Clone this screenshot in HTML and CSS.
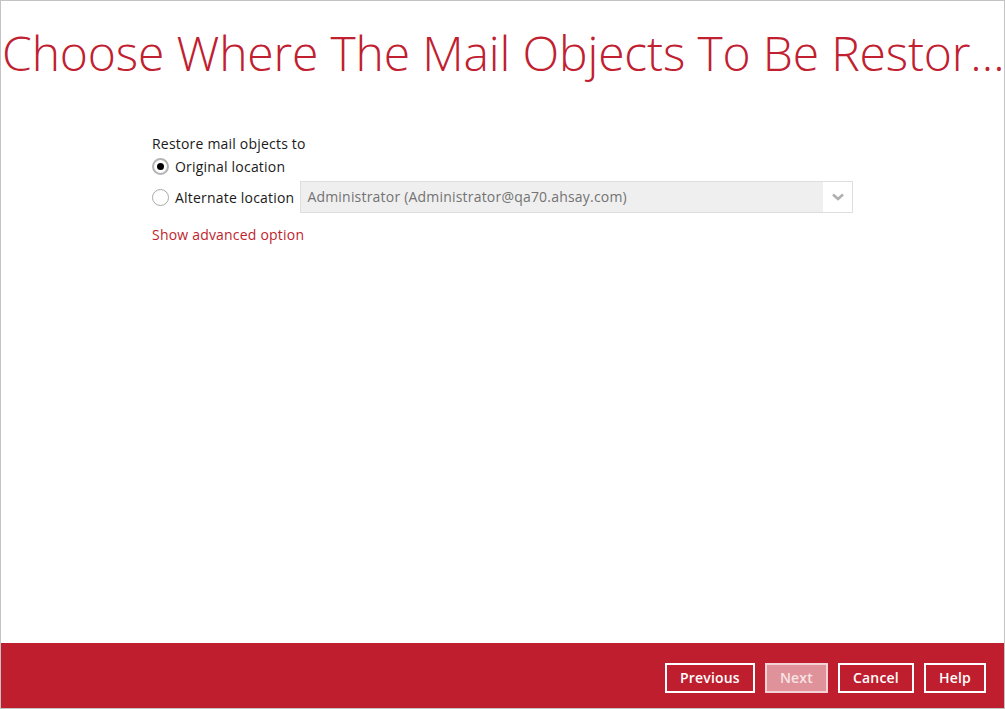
FILE: index.html
```html
<!DOCTYPE html>
<html lang="en">
<head>
    <meta charset="UTF-8">
    <meta name="viewport" content="width=device-width, initial-scale=1.0">
    <title>Restore</title>
    <link rel="stylesheet" href="styles.css">
</head>
<body>
    <div class="window">
        <h1 class="page-title">Choose Where The Mail Objects To Be Restor…</h1>

        <div class="content">
            <div class="section-label">Restore mail objects to</div>
            <label class="option option-first">
                <span class="radio checked"></span>
                <span>Original location</span>
            </label>
            <div class="option option-alt">
                <span class="radio"></span>
                <span class="option-text">Alternate location</span>
                <div class="select">
                    <span class="select-value">Administrator (Administrator@qa70.ahsay.com)</span>
                    <span class="select-arrow">
                        <svg width="12" height="8" viewBox="0 0 12 8">
                            <path d="M1 1.5 L6 6 L11 1.5" fill="none" stroke="#b0b0b0" stroke-width="2.6"/>
                        </svg>
                    </span>
                </div>
            </div>
            <a class="advanced-link" href="javascript:void(0)">Show advanced option</a>
        </div>

        <div class="footer">
            <a class="button" href="javascript:void(0)">Previous</a>
            <a class="button disabled" href="javascript:void(0)">Next</a>
            <a class="button" href="javascript:void(0)">Cancel</a>
            <a class="button" href="javascript:void(0)">Help</a>
        </div>
    </div>
</body>
</html>
```

FILE: styles.css
```css
html, body {
    margin : 0;
    padding: 0;
}
*, *::before, *::after {
    box-sizing: border-box;
}
body {
    width : 1005px;
    height: 709px;

    font-family: "Open Sans", "Liberation Sans", sans-serif;
    font-size  : 14px;
    color      : #1a1a1a;
    background : #fff;
}
.window {
    width : 100%;
    height: 100%;
    border: 1px solid #c3c3c3;

    display       : flex;
    flex-direction: column;
}
.page-title {
    margin : 18px 0 0 0;
    padding: 0 0 0 1px;

    font-size     : 48px;
    font-weight   : 300;
    line-height   : 68px;
    letter-spacing: -0.16px;
    color         : #c0202f;

    white-space: nowrap;
}
.content {
    flex: 1;
    padding: 47px 0 0 151px;

    display       : flex;
    flex-direction: column;
    align-items   : flex-start;

    letter-spacing: 0.2px;
}
.section-label {
    line-height: 20px;
}
.option {
    display    : flex;
    align-items: center;
    gap        : 6px;
}
.option-first {
    margin-top: 0;
    height    : 24px;
}
.option-alt {
    margin-top: 3px;
    height    : 32px;
}
.radio {
    width : 17px;
    height: 17px;

    border       : 1px solid #a8a8a8;
    border-radius: 50%;
    background   : #fff;

    display        : flex;
    align-items    : center;
    justify-content: center;
}
.radio.checked {
    border: 2px solid #b4b4b4;
}
.radio.checked::after {
    content: "";
    width : 7px;
    height: 7px;
    border-radius: 50%;
    background   : #000;
}
.select {
    width : 553px;
    height: 32px;

    border    : 1px solid #dedede;
    background: #efefef;

    display    : flex;
    align-items: stretch;
}
.select-value {
    flex: 1;
    padding-left: 6px;

    color      : #737373;
    line-height: 30px;
}
.select-arrow {
    width     : 29px;
    background: #fff;

    display        : flex;
    align-items    : center;
    justify-content: center;
}
.advanced-link {
    margin-top: 12px;

    line-height    : 20px;
    color          : #be1e2d;
    text-decoration: none;
}
.footer {
    height : 65px;
    padding: 20px 18px 0 0;

    background: #be1e2d;

    display        : flex;
    justify-content: flex-end;
    align-items    : flex-start;
    gap            : 10px;
}
.button {
    height : 30px;
    padding: 0 13px;

    border: 2px solid #fff;

    color          : #fff;
    font-weight    : 600;
    line-height    : 26px;
    letter-spacing : 0.2px;
    text-decoration: none;
}
.button.disabled {
    background  : #df9299;
    border-color: #f4d2d5;
    color       : #f8e4e6;
}
```
